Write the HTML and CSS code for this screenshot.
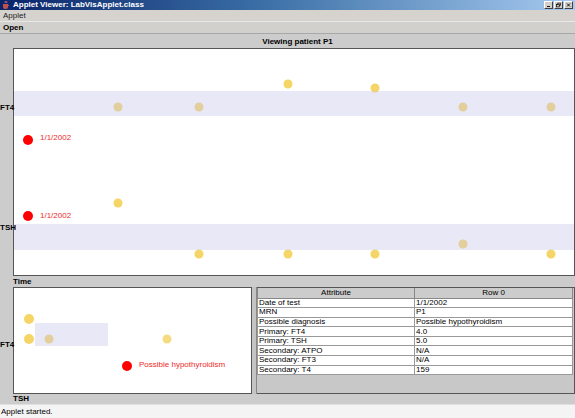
FILE: index.html
```html
<!DOCTYPE html>
<html>
<head>
<meta charset="utf-8">
<link rel="stylesheet" href="styles.css">
</head>
<body>
<div class="window">
  <div class="titlebar">
    <svg class="appicon" width="8" height="8" viewBox="0 0 8 8"><path d="M1 3h5v3a2 2 0 0 1-2 2H3a2 2 0 0 1-2-2z" fill="#c0504d"/><path d="M6 4h1v1H6z" fill="#c0504d"/><path d="M3 0q1 1 0 2M4.5 0q1 1 0 2" stroke="#ff8080" stroke-width="0.7" fill="none"/></svg>
    <span class="title">Applet Viewer: LabVisApplet.class</span>
    <div class="winbtns">
      <span class="wbtn"><svg width="8" height="8" viewBox="0 0 8 8"><path d="M2 6h4" stroke="#000" stroke-width="1.2"/></svg></span>
      <span class="wbtn"><svg width="8" height="8" viewBox="0 0 8 8"><rect x="3" y="1.5" width="3.5" height="3" fill="none" stroke="#000" stroke-width="0.9"/><rect x="1.5" y="3.5" width="3.5" height="3" fill="#d4d0c8" stroke="#000" stroke-width="0.9"/></svg></span>
      <span class="wbtn"><svg width="8" height="8" viewBox="0 0 8 8"><path d="M2 2l4 4M6 2l-4 4" stroke="#000" stroke-width="1.2"/></svg></span>
    </div>
  </div>
  <div class="menubar">Applet</div>
  <div class="toolbar">Open</div>
  <div class="applet">
    <div class="heading">Viewing patient P1</div>
    <svg class="mainchart" width="575" height="228" viewBox="0 0 575 228">
      <rect x="13.5" y="0.5" width="561" height="227" fill="#fff" stroke="#555"/>
      <circle cx="118" cy="59" r="4.5" class="yel"/>
      <circle cx="199" cy="59" r="4.5" class="yel"/>
      <circle cx="288" cy="36" r="4.5" class="yel"/>
      <circle cx="375" cy="40" r="4.5" class="yel"/>
      <circle cx="463" cy="59" r="4.5" class="yel"/>
      <circle cx="551" cy="59" r="4.5" class="yel"/>
      <circle cx="118" cy="155" r="4.5" class="yel"/>
      <circle cx="199" cy="206" r="4.5" class="yel"/>
      <circle cx="288" cy="206" r="4.5" class="yel"/>
      <circle cx="375" cy="206" r="4.5" class="yel"/>
      <circle cx="463" cy="196" r="4.5" class="yel"/>
      <circle cx="551" cy="206" r="4.5" class="yel"/>
      <rect x="14" y="43" width="560" height="25" class="band"/>
      <rect x="14" y="176" width="560" height="26" class="band"/>
      <circle cx="28" cy="92" r="5" class="red"/>
      <circle cx="28" cy="168" r="5" class="red"/>
      <text x="40" y="92" class="redtxt">1/1/2002</text>
      <text x="40" y="170" class="redtxt">1/1/2002</text>
      <text x="0" y="62" class="axis">FT4</text>
      <text x="0" y="182" class="axis">TSH</text>
    </svg>
    <div class="timelabel">Time</div>
    <div class="lower">
      <svg class="lowerchart" width="252" height="107" viewBox="0 0 252 107">
        <rect x="13.5" y="0.5" width="238" height="106" fill="#fff" stroke="#555"/>
        <circle cx="29" cy="32" r="5" class="yel"/>
        <circle cx="29" cy="52" r="5" class="yel"/>
        <circle cx="49" cy="52" r="4.5" class="yel"/>
        <circle cx="167" cy="52" r="4.5" class="yel lite"/>
        <rect x="35" y="36" width="73" height="23" class="band"/>
        <circle cx="127" cy="79" r="5" class="red"/>
        <text x="139" y="80" class="redtxt">Possible hypothyroidism</text>
        <text x="0" y="60" class="axis">FT4</text>
      </svg>
      <div class="scrollstrip"></div>
      <div class="tablewrap">
        <table class="attrs">
          <thead><tr><th>Attribute</th><th>Row 0</th></tr></thead>
          <tbody>
            <tr><td>Date of test</td><td>1/1/2002</td></tr>
            <tr><td>MRN</td><td>P1</td></tr>
            <tr><td>Possible diagnosis</td><td>Possible hypothyroidism</td></tr>
            <tr><td>Primary: FT4</td><td>4.0</td></tr>
            <tr><td>Primary: TSH</td><td>5.0</td></tr>
            <tr><td>Secondary: ATPO</td><td>N/A</td></tr>
            <tr><td>Secondary: FT3</td><td>N/A</td></tr>
            <tr><td>Secondary: T4</td><td>159</td></tr>
          </tbody>
        </table>
      </div>
    </div>
    <div class="tshlabel">TSH</div>
  </div>
  <div class="status">Applet started.</div>
</div>
</body>
</html>
```
FILE: styles.css
```css
* { box-sizing: border-box; }
html, body { margin: 0; padding: 0; }
body {
  width: 575px;
  height: 418px;
  overflow: hidden;
  font-family: "Liberation Sans", Arial, sans-serif;
  font-size: 8px;
  color: #000;
  background: #cccccc;
}
.window { display: flex; flex-direction: column; height: 418px; }
.titlebar {
  height: 10px;
  display: flex;
  align-items: center;
  background: linear-gradient(to right, #0a246a 0%, #3a6ea5 45%, #a6caf0 100%);
  color: #fff;
  padding-left: 2px;
}
.appicon { flex: none; margin-right: 3px; }
.title { font-weight: bold; font-size: 8px; line-height: 10px; white-space: nowrap; }
.winbtns { margin-left: auto; display: flex; gap: 1px; padding-right: 2px; }
.wbtn {
  width: 9px; height: 8px;
  background: #d4d0c8;
  border: 1px solid; border-color: #fff #404040 #404040 #fff;
  display: flex; align-items: center; justify-content: center;
  overflow: hidden;
}
.wbtn svg { width: 7px; height: 6px; }
.menubar {
  height: 11px;
  line-height: 11px;
  padding-left: 3px;
  background: #d6d3ce;
  color: #222;
}
.toolbar {
  height: 13px;
  line-height: 12px;
  padding-left: 3px;
  font-weight: bold;
  background: #d2d0cc;
  border-top: 1px solid #e8e8e8;
  border-bottom: 1px solid #a8a8a8;
}
.applet { flex: 1; display: flex; flex-direction: column; background: #cccccc; }
.heading {
  height: 14px;
  line-height: 16px;
  text-align: center;
  font-weight: bold;
  padding-left: 20px;
}
.mainchart, .lowerchart { display: block; flex: none; }
.yel { fill: #f5d565; }
.yel.lite { fill: #f6dc80; }
.red { fill: #ff0000; }
.band { fill: rgba(200, 200, 235, 0.42); }
.redtxt { fill: #ee2a2a; font-family: "Liberation Sans", Arial, sans-serif; font-size: 8px; }
.axis { fill: #000; font-family: "Liberation Sans", Arial, sans-serif; font-size: 8px; font-weight: bold; }
.timelabel {
  height: 11px;
  line-height: 11px;
  padding-left: 13px;
  font-weight: bold;
}
.lower { display: flex; height: 107px; }
.scrollstrip {
  width: 5px;
  background: #c4c4c4;
  border-right: 1px solid #888;
}
.tablewrap {
  flex: 1;
  background: #c8c8c8;
  border: 1px solid #555;
  border-left: none;
  overflow: hidden;
}
.attrs {
  width: 316px;
  border-collapse: collapse;
  table-layout: fixed;
  font-size: 8px;
}
.attrs th {
  height: 10px;
  font-weight: normal;
  background: #cccccc;
  border: 1px solid #888;
  border-top: none;
  padding: 0;
  line-height: 8px;
}
.attrs th:first-child { width: 157px; }
.attrs td {
  height: 9.6px;
  background: #fff;
  border: 1px solid #999;
  padding: 0 0 0 1px;
  line-height: 8px;
  white-space: nowrap;
}
.tshlabel {
  height: 10px;
  line-height: 10px;
  padding-left: 13px;
  font-weight: bold;
}
.status {
  height: 14px;
  line-height: 13px;
  padding-left: 1px;
  background: #f4f4f4;
  border-top: 1px solid #e0e0e0;
}
```
